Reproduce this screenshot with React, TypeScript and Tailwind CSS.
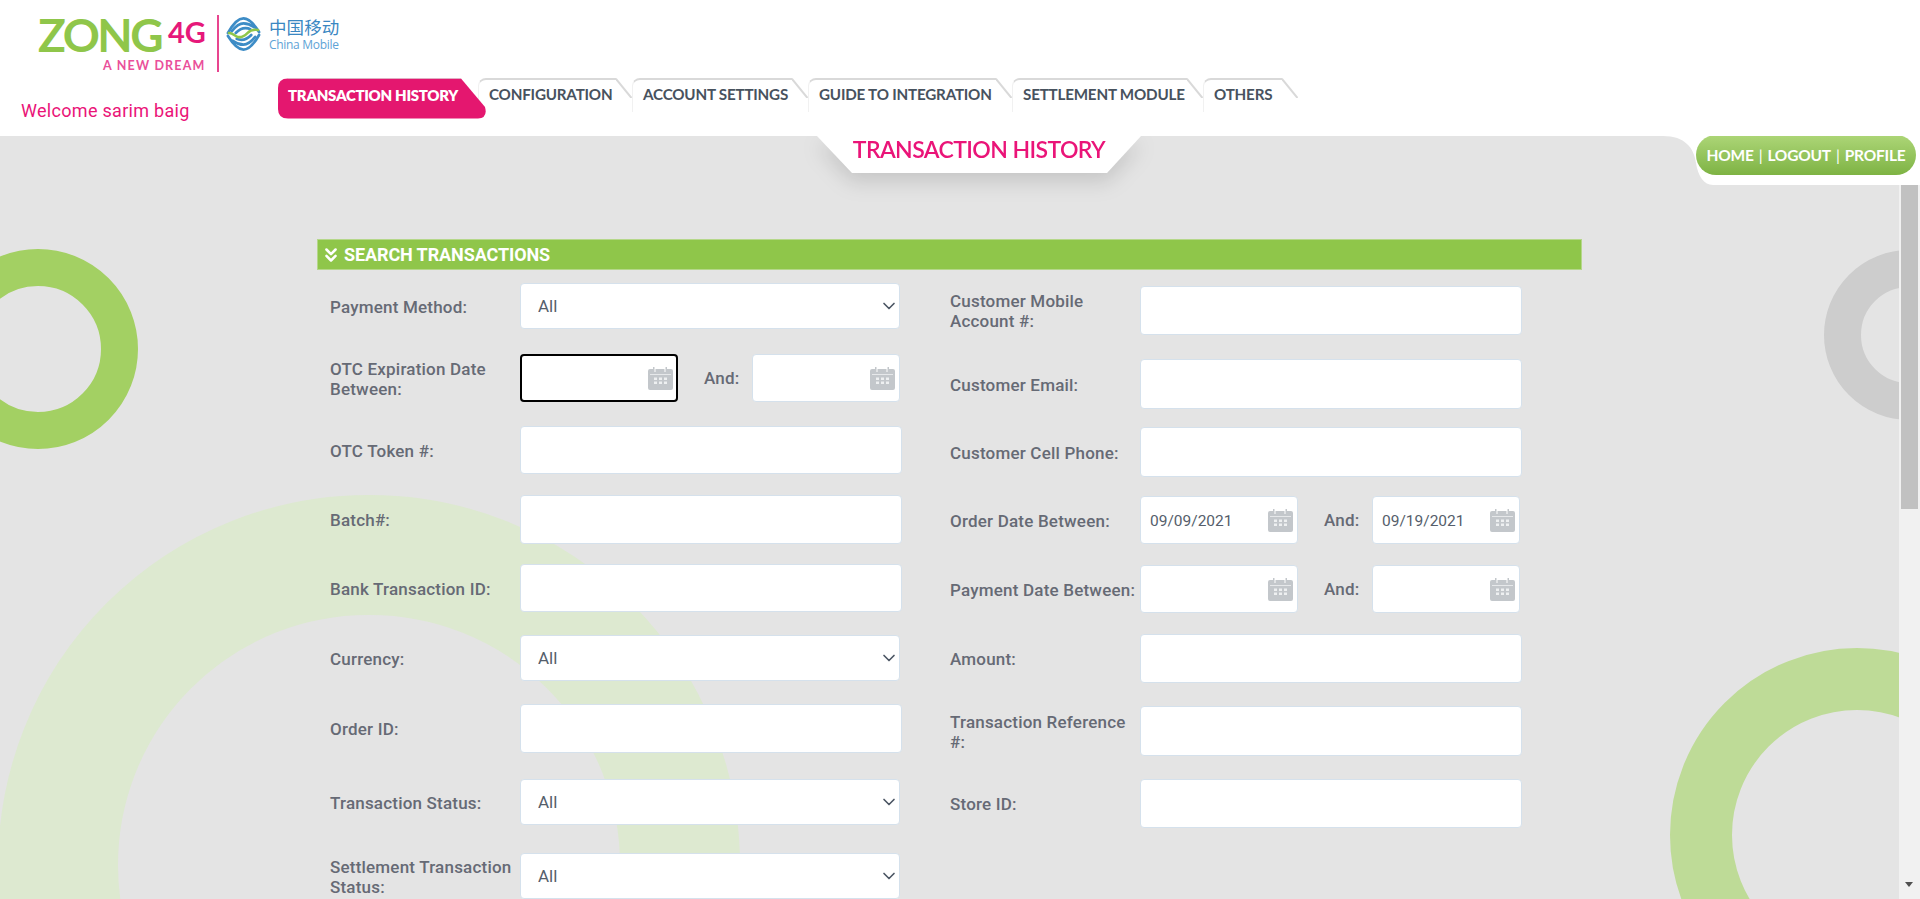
import { ChevronDown, ChevronsDown } from 'lucide-react';

const din = "font-['Roboto','Liberation_Sans',sans-serif]";
const geo = "font-['Lato','Liberation_Sans',sans-serif]";

type Field = {
  label: string;
  kind: 'select' | 'text' | 'dates';
  spacing: string; // gap above the row, the original table is uneven
  height: string;
  from?: string;
  to?: string;
  focused?: boolean;
};

const leftFields: Field[] = [
  { label: 'Payment Method:', kind: 'select', spacing: 'mt-[13px]', height: 'h-[46px]' },
  { label: 'OTC Expiration Date Between:', kind: 'dates', spacing: 'mt-[25px]', height: 'h-[48px]', focused: true },
  { label: 'OTC Token #:', kind: 'text', spacing: 'mt-[24px]', height: 'h-[48px]' },
  { label: 'Batch#:', kind: 'text', spacing: 'mt-[21px]', height: 'h-[49px]' },
  { label: 'Bank Transaction ID:', kind: 'text', spacing: 'mt-[20px]', height: 'h-[48px]' },
  { label: 'Currency:', kind: 'select', spacing: 'mt-[23px]', height: 'h-[46px]' },
  { label: 'Order ID:', kind: 'text', spacing: 'mt-[23px]', height: 'h-[49px]' },
  { label: 'Transaction Status:', kind: 'select', spacing: 'mt-[26px]', height: 'h-[46px]' },
  { label: 'Settlement Transaction Status:', kind: 'select', spacing: 'mt-[28px]', height: 'h-[46px]' },
];

const rightFields: Field[] = [
  { label: 'Customer Mobile Account #:', kind: 'text', spacing: 'mt-[16px]', height: 'h-[49px]' },
  { label: 'Customer Email:', kind: 'text', spacing: 'mt-[24px]', height: 'h-[50px]' },
  { label: 'Customer Cell Phone:', kind: 'text', spacing: 'mt-[18px]', height: 'h-[50px]' },
  { label: 'Order Date Between:', kind: 'dates', spacing: 'mt-[19px]', height: 'h-[48px]', from: '09/09/2021', to: '09/19/2021' },
  { label: 'Payment Date Between:', kind: 'dates', spacing: 'mt-[21px]', height: 'h-[48px]' },
  { label: 'Amount:', kind: 'text', spacing: 'mt-[21px]', height: 'h-[49px]' },
  { label: 'Transaction Reference #:', kind: 'text', spacing: 'mt-[23px]', height: 'h-[50px]' },
  { label: 'Store ID:', kind: 'text', spacing: 'mt-[23px]', height: 'h-[49px]' },
];

const tabs = [
  { name: 'CONFIGURATION', width: 'w-[154px]' },
  { name: 'ACCOUNT SETTINGS', width: 'w-[176px]' },
  { name: 'GUIDE TO INTEGRATION', width: 'w-[204px]' },
  { name: 'SETTLEMENT MODULE', width: 'w-[191px]' },
  { name: 'OTHERS', width: 'w-[95px]' },
];

function CalendarIcon() {
  return (
    <svg viewBox="0 0 25 24" className="absolute right-[5px] top-1/2 h-[24px] w-[25px] -translate-y-1/2" fill="#c3c7cb">
      <path d="M2 3h3V1h1.500v5h1V3h9v3h1V1H19v2h4a2 2 0 0 1 2 2v17a2 2 0 0 1-2 2H2a2 2 0 0 1-2-2V5a2 2 0 0 1 2-2z" />
      <rect x="2" y="8" width="21" height="1" fill="#e6e8ea" />
      <g fill="#eef0f1">
        <rect x="6" y="11.500" width="3" height="2.500" />
        <rect x="11" y="11.500" width="3" height="2.500" />
        <rect x="16" y="11.500" width="3" height="2.500" />
        <rect x="6" y="15.500" width="3" height="2.500" />
        <rect x="11" y="15.500" width="3" height="2.500" />
        <rect x="16" y="15.500" width="3" height="2.500" />
      </g>
    </svg>
  );
}

function ChinaMobileMark() {
  return (
    <svg viewBox="0 0 36 36" className="h-[36px] w-[35px]" fill="none" strokeLinecap="round">
      <g stroke="#3d8cc6" strokeWidth="2.800">
        <path d="M2 17C7 8 12 2 18 2c6 0 11 6 16 14" />
        <path d="M6 15c4-5 8-8 12-8 4 0 7 1 11 4" />
        <path d="M10 17c3-3 6-5 10-5 2 0 3 0 5 1" />
        <path d="M34 19c-5 9-10 15-16 15-6 0-11-6-16-14" />
        <path d="M30 21c-4 5-8 8-12 8-4 0-7-1-11-4" />
        <path d="M26 19c-3 3-6 5-10 5-2 0-3 0-5-1" />
      </g>
      <path d="M3 17c4 0 6 3 9 4 4 1 7-1 10-4 3-3 6-4 11-3" stroke="#8fc64a" strokeWidth="2.600" />
    </svg>
  );
}

function Logo() {
  return (
    <div className="flex h-[57px] items-start pl-[38px] pt-[15px]">
      <div className="relative h-[57px] w-[167px]">
        <span className={`${geo} absolute left-0 top-[2px] text-[46px] leading-[36px] font-bold tracking-[-2.500px] text-[#8fc64a]`}>ZONG</span>
        <span className={`${geo} absolute left-[130px] top-[-1px] text-[29px] leading-[36px] font-bold text-[#e6187a]`}>4G</span>
        <span className={`${geo} absolute left-[65px] top-[43px] text-[12.500px] leading-[16px] font-bold tracking-[1.200px] whitespace-nowrap text-[#ea4f9a]`}>A NEW DREAM</span>
      </div>
      <div className="ml-[12px] h-[57px] w-[2px] bg-[#e8458f]" />
      <div className="ml-[7px] mt-[1px]">
        <ChinaMobileMark />
      </div>
      <div className="ml-[8px] mt-[2px] flex flex-col">
        <span className="font-['Noto_Sans_CJK_SC',sans-serif] text-[17.500px] leading-[20px] tracking-[0.100px] whitespace-nowrap text-[#3a87c2]">中国移动</span>
        <span className="mt-[1px] font-['Open_Sans',sans-serif] text-[12px] leading-[14px] tracking-[-0.300px] whitespace-nowrap text-[#5ea3d6]">China Mobile</span>
      </div>
    </div>
  );
}

function NavTabs() {
  return (
    <nav className="flex items-start">
      <div
        className={`${geo} relative z-10 flex h-[41px] w-[209px] items-center pb-[6px] pl-[10px] text-[15px] font-extrabold tracking-[-0.300px] whitespace-nowrap text-white`}
      >
        <svg viewBox="0 0 209 41" className="absolute inset-0 h-full w-full">
          <path d="M10 0.500H183L207 29q3 11-7 11.500H10Q0 40.500 0 31V10Q0 0.500 10 0.500z" fill="#e4176f" />
          <path d="M10 0.500H183" stroke="#d2d2d2" strokeWidth="2" transform="translate(0 -1)" />
        </svg>
        <span className="relative">TRANSACTION HISTORY</span>
      </div>
      <div className="-ml-[9px] flex">
        {tabs.map((tab) => (
          <div
            key={tab.name}
            className={`${geo} ${tab.width} relative flex h-[34px] items-center rounded-tl-[8px] border-l border-t-2 border-l-[#f1f1f1] border-t-[#d9d9d9] pb-[3px] pl-[10px] text-[15.200px] font-bold tracking-[-0.200px] whitespace-nowrap text-[#48525e]`}
          >
            {tab.name}
            <svg viewBox="0 0 16 20" className="absolute right-0 top-[-2px] h-[20px] w-[16px] bg-white">
              <path d="M0 1 L15.500 20" stroke="#d9d9d9" strokeWidth="2" fill="none" />
              <path d="M0 1H0.500" stroke="#d9d9d9" strokeWidth="2" />
            </svg>
          </div>
        ))}
      </div>
    </nav>
  );
}

function DateInput({ value, focused, narrow }: { value?: string; focused?: boolean; narrow?: boolean }) {
  return (
    <div className={`relative h-full ${narrow ? 'w-[148px]' : 'w-[158px]'}`}>
      <input
        type="text"
        readOnly
        defaultValue={value}
        className={`h-full w-full rounded-[4px] bg-white pl-[9px] pt-[2px] ${din} text-[15.500px] text-[#555e6b] outline-none ${
          focused ? 'border-2 border-black' : 'border border-[#d5e1ec]'
        }`}
      />
      <CalendarIcon />
    </div>
  );
}

function FieldRow({ field }: { field: Field }) {
  return (
    <div className={`flex items-center ${field.spacing} ${field.height}`}>
      <label className={`${din} w-[190px] shrink-0 pr-[3px] pt-[1px] text-[17px] leading-[20px] font-medium tracking-[0.200px] text-[#666a75]`}>
        {field.label}
      </label>
      {field.kind === 'select' && (
        <div className="relative h-full w-[380px]">
          <select className={`h-full w-full appearance-none rounded-[4px] border border-[#d5e1ec] bg-white pl-[17px] pt-[2px] ${din} text-[17px] text-[#555e6b] outline-none`}>
            <option>All</option>
          </select>
          <ChevronDown className="pointer-events-none absolute right-[1px] top-1/2 h-[20px] w-[20px] -translate-y-1/2 text-[#4b5563]" strokeWidth={2} />
        </div>
      )}
      {field.kind === 'text' && (
        <input type="text" className="h-full w-[381.500px] rounded-[4px] border border-[#d5e1ec] bg-white outline-none" />
      )}
      {field.kind === 'dates' && (
        <div className="flex h-full items-center">
          <DateInput value={field.from} focused={field.focused} />
          <span className={`${din} ml-[26px] w-[48px] pt-[1px] text-[17px] font-medium tracking-[0.200px] text-[#666a75]`}>And:</span>
          <DateInput value={field.to} narrow />
        </div>
      )}
    </div>
  );
}

export default function App() {
  return (
    <div className="flex h-[899px] w-full flex-col overflow-hidden bg-white">
      {/* Top banner */}
      <header className="h-[136px] shrink-0">
        <Logo />
        <div className="mt-[21px] flex">
          <div className={`${din} w-[278px] shrink-0 pl-[21px] pt-[21px] text-[18px] leading-[24px] tracking-[0.300px] text-[#ea1478]`}>
            Welcome sarim baig
          </div>
          <NavTabs />
        </div>
      </header>

      <main className="relative min-h-0 flex-1 overflow-hidden bg-[#e4e4e4]">
        {/* Background rings */}
        <div className="absolute left-[-62px] top-[113px] h-[200px] w-[200px] rounded-full border-[37px] border-[#a3d063]" />
        <div className="absolute left-[-2px] top-[359px] h-[740px] w-[742px] rounded-full border-[120px] border-[#dde9d0]" />
        <div className="absolute left-[1824px] top-[114px] h-[170px] w-[170px] rounded-full border-[37px] border-[#cdcdcd]" />
        <div className="absolute left-[1670px] top-[512px] h-[374px] w-[374px] rounded-full border-[62px] border-[#bedb97]" />

        {/* White notch behind the quick links */}
        <svg viewBox="0 0 257 49" className="absolute right-0 top-0 z-10 h-[49px] w-[257px]">
          <path d="M0 0C22 0 31 12 33 27 35 40 41 49 50 49H257V0z" fill="#fff" />
        </svg>

        {/* Scrollbar */}
        <div className="absolute bottom-0 right-0 top-[49px] z-10 w-[21px] bg-[#f1f1f1]">
          <div className="mx-auto h-[324px] w-[17px] bg-[#c1c1c1]" />
          <div className="absolute bottom-[12px] left-[6px] h-0 w-0 border-x-[4.500px] border-t-[5px] border-x-transparent border-t-[#505050]" />
        </div>

        {/* Page title tab */}
        <div className="absolute left-[817px] top-0 z-10 h-[37px] w-[324px] drop-shadow-[0_9px_10px_rgba(0,0,0,0.13)]">
          <svg viewBox="0 0 324 37" className="absolute inset-0 h-full w-full">
            <path d="M0 0H324L290 37H35z" fill="#fff" />
          </svg>
          <h1 className={`${geo} relative text-center text-[23px] leading-[27px] font-semibold tracking-[-0.600px] text-[#ea1478]`}>
            TRANSACTION HISTORY
          </h1>
        </div>

        {/* Quick links */}
        <div className={`${geo} absolute left-[1696px] top-[-1px] z-20 flex h-[40px] w-[220px] items-center justify-center rounded-[20px] bg-gradient-to-b from-[#add677] to-[#7eb343] pt-[2px] text-[15.500px] font-bold tracking-[-0.200px] whitespace-nowrap text-white`}>
          HOME<span className="mx-[5px] font-normal">|</span>LOGOUT<span className="mx-[5px] font-normal">|</span>PROFILE
        </div>

        {/* Search form */}
        <section className="relative ml-[317px] w-[1265px] pt-[103px]">
          <div className="flex h-[31px] items-center border border-[#b5d78a] bg-[#8fc64a] pl-[2px]">
            <ChevronsDown className="h-[22px] w-[22px] text-white" strokeWidth={2.8} />
            <h2 className={`${din} ml-[2px] text-[18px] font-bold tracking-[-0.100px] text-white`}>SEARCH TRANSACTIONS</h2>
          </div>
          <div className="flex">
            <div className="ml-[13px] w-[620px] shrink-0">
              {leftFields.map((field) => (
                <FieldRow key={field.label} field={field} />
              ))}
            </div>
            <div>
              {rightFields.map((field) => (
                <FieldRow key={field.label} field={field} />
              ))}
            </div>
          </div>
        </section>
      </main>
    </div>
  );
}
